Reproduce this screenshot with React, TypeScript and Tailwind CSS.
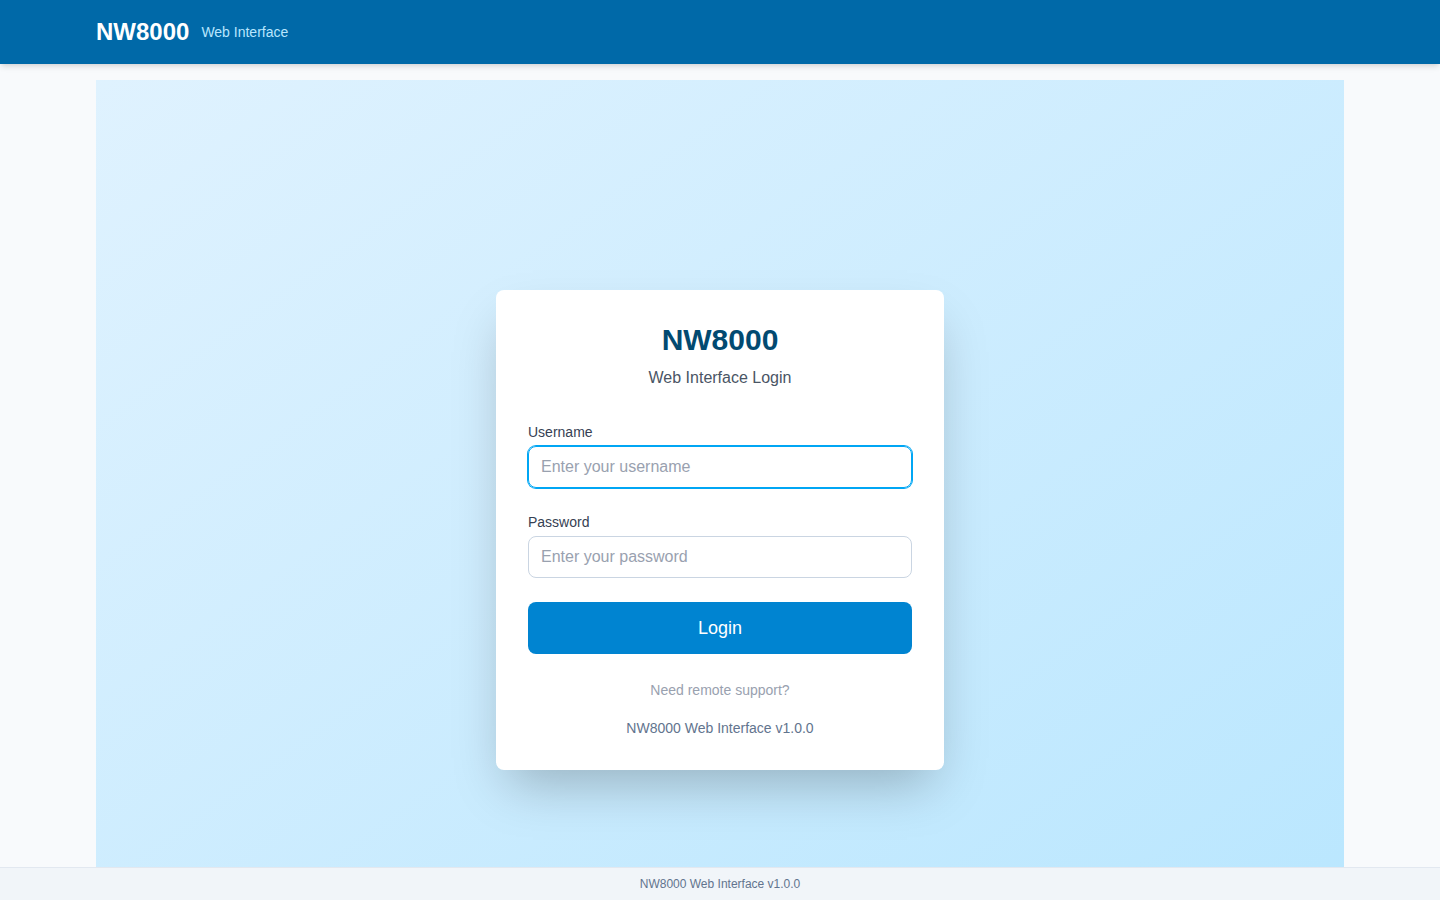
import React, { useState } from 'react'

export default function App() {
  const [username, setUsername] = useState('')
  const [password, setPassword] = useState('')

  const onSubmit = (e: React.FormEvent) => {
    e.preventDefault()
  }

  return (
    <div className="min-h-screen bg-slate-50 font-['Liberation_Sans',Arial,sans-serif]">
      <header className="bg-sky-700 shadow-md">
        <div className="mx-auto flex h-16 max-w-7xl items-center px-4">
          <h1 className="text-2xl font-bold text-white">NW8000</h1>
          <span className="ml-3 text-sm text-sky-200">Web Interface</span>
        </div>
      </header>

      <main className="mx-auto max-w-7xl px-4 py-4">
        <div className="flex min-h-screen items-center justify-center bg-linear-to-br from-sky-100 to-sky-200">
          <div className="w-full max-w-md rounded-lg bg-white p-8 shadow-2xl">
            <div className="mb-8 text-center">
              <h2 className="text-3xl font-bold text-sky-900">NW8000</h2>
              <p className="mt-2 text-base text-gray-600">Web Interface Login</p>
            </div>

            <form onSubmit={onSubmit}>
              <div className="mb-6">
                <label htmlFor="username" className="mb-1 block text-sm text-gray-700">
                  Username
                </label>
                <input
                  id="username"
                  type="text"
                  value={username}
                  onChange={(e) => setUsername(e.target.value)}
                  placeholder="Enter your username"
                  className="block w-full rounded-lg border border-sky-500 px-3 py-2 text-base text-gray-900 outline-none ring-1 ring-sky-500 placeholder:text-gray-400"
                />
              </div>
              <div className="mb-6">
                <label htmlFor="password" className="mb-1 block text-sm text-gray-700">
                  Password
                </label>
                <input
                  id="password"
                  type="password"
                  value={password}
                  onChange={(e) => setPassword(e.target.value)}
                  placeholder="Enter your password"
                  className="block w-full rounded-lg border border-slate-300 px-3 py-2 text-base text-gray-900 outline-none placeholder:text-gray-400"
                />
              </div>
              <button
                type="submit"
                className="w-full rounded-lg bg-sky-600 py-3 text-lg text-white hover:bg-sky-700"
              >
                Login
              </button>
            </form>

            <div className="mt-[26px] text-center text-sm">
              <a href="#" className="text-gray-400 hover:text-sky-600">
                Need remote support?
              </a>
            </div>
            <p className="mt-[18px] text-center text-sm text-slate-500">
              NW8000 Web Interface v1.0.0
            </p>
          </div>
        </div>
      </main>

      <footer className="fixed inset-x-0 bottom-0 border-t border-slate-200 bg-slate-100 py-2 text-center text-xs text-slate-500">
        NW8000 Web Interface v1.0.0
      </footer>
    </div>
  )
}
